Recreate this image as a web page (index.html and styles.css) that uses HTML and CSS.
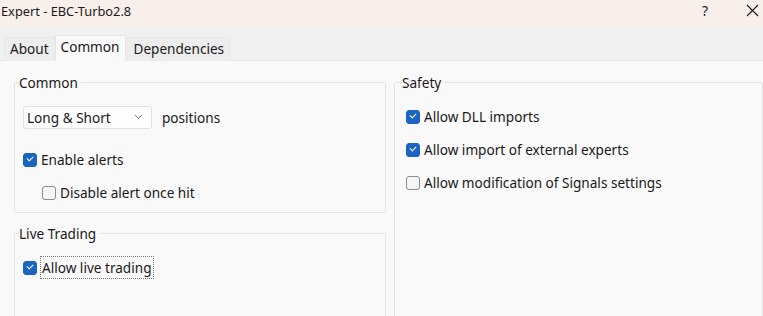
FILE: index.html
```html
<!DOCTYPE html>
<html>
<head>
    <title>Expert - EBC-Turbo2.8</title>
    <link rel="stylesheet" href="styles.css">
</head>
<body>

    <div class="titlebar">
        <span class="title">Expert - EBC-Turbo2.8</span>
        <span class="help">?</span>
        <span class="close">
            <svg width="13" height="13" viewBox="0 0 13 13"><path d="M1 1L12 12M12 1L1 12" stroke="#1a1a1a" stroke-width="1.1" fill="none"/></svg>
        </span>
    </div>

    <div class="tabs">
        <div class="tab">About</div>
        <div class="tab active">Common</div>
        <div class="tab">Dependencies</div>
    </div>

    <div class="panel">
        <div class="left">
            <fieldset class="group common">
                <legend>Common</legend>
                <div class="row first">
                    <div class="select">
                        <span>Long &amp; Short</span>
                        <svg width="9" height="6" viewBox="0 0 9 6"><path d="M1 1L4.5 4.5L8 1" stroke="#777" stroke-width="1" fill="none"/></svg>
                    </div>
                    <span class="after">positions</span>
                </div>
                <label class="row check"><span class="box on"></span>Enable alerts</label>
                <label class="row check sub"><span class="box"></span>Disable alert once hit</label>
            </fieldset>

            <fieldset class="group live">
                <legend>Live Trading</legend>
                <label class="row check"><span class="box on"></span><span class="focus">Allow live trading</span></label>
            </fieldset>
        </div>

        <fieldset class="group safety">
            <legend>Safety</legend>
            <label class="row check"><span class="box on"></span>Allow DLL imports</label>
            <label class="row check"><span class="box on"></span>Allow import of external experts</label>
            <label class="row check"><span class="box"></span>Allow modification of Signals settings</label>
        </fieldset>
    </div>

</body>
</html>
```

FILE: styles.css
```css
html, body {
    height: 100%; width: 100%;
}
body {
    margin: 0;
    overflow: hidden;
    background: #F9F9F9;
    color: #1A1A1A;
    font-family: "Noto Sans", "Open Sans", sans-serif;
    font-size: 13.6px;
}

.titlebar {
    display: flex;
    align-items: center;
    height: 27px;
    background: #F8EFEA;
    font-size: 12.8px;
}
.titlebar .title {
    flex: 1;
    padding-left: 1px;
    margin-top: -5px;
}
.titlebar .help {
    width: 44px;
    margin-top: -6px;
    font-size: 14px;
}
.titlebar .close {
    display: flex;
    width: 17px;
    margin-top: -7px;
}

.tabs {
    display: flex;
    align-items: flex-end;
    height: 33px;
    padding-left: 4px;
    background: #F0F0F0;
    border-bottom: 1px solid #E6E6E6;
}
.tab {
    height: 23px;
    line-height: 22px;
    padding: 0 5px;
    margin-bottom: -1px;
    background: #EDEDED;
    border: 1px solid #E8E8E8;
    border-bottom: 0;
}
.tab.active {
    height: 25px;
    line-height: 21px;
    padding: 0 6px 0 5px;
    margin: 0 1px -1px 0;
    background: #F9F9F9;
    border-color: #E6E6E6;
}

.panel {
    display: flex;
    gap: 8px;
    box-sizing: border-box;
    height: 255px;
    padding: 14px 0 0 14px;
    overflow: hidden;
}
.left {
    display: flex;
    flex-direction: column;
    gap: 13px;
    width: 372px;
}

.group {
    box-sizing: border-box;
    flex-shrink: 0;
    margin: 0;
    padding: 0 0 0 8px;
    border: 1px solid #E4E4E4;
    border-radius: 2px;
}
.group legend {
    padding: 0 3px 0 0;
    margin-left: -4px;
    line-height: 15px;
}
.common {
    height: 138px;
    padding-top: 12px;
}
.live {
    height: 120px;
    padding-top: 10px;
}
.safety {
    flex: 1;
    height: 260px;
    padding: 10px 0 0 11px;
}

.row {
    display: flex;
    align-items: center;
    height: 33px;
}
.row.first {
    height: 30px;
    margin-bottom: 11px;
}
.check.sub {
    padding-left: 19px;
}

.select {
    display: flex;
    align-items: center;
    justify-content: space-between;
    box-sizing: border-box;
    width: 129px;
    height: 23px;
    padding: 0 8px 0 3px;
    background: #FDFDFD;
    border: 1px solid #E2E2E2;
    border-radius: 3px;
}
.after {
    margin-left: 10px;
}

.box {
    box-sizing: border-box;
    width: 14px; height: 14px;
    margin-right: 4px;
    background: #F6F6F6;
    border: 1px solid #8C8C8C;
    border-radius: 3px;
    position: relative;
}
.box.on {
    background: #1C63C2;
    border-color: #1C63C2;
}
.box.on:after {
    content: '';
    position: absolute;
    left: 3px; top: 2px;
    width: 5px; height: 3px;
    border-left: 1px solid #FFF;
    border-bottom: 1px solid #FFF;
    transform: rotate(-45deg);
    transform-origin: 3px 2px;
}
.focus {
    margin-left: -1px;
    padding: 1px 1px;
    border: 1px dotted #777;
}
```
